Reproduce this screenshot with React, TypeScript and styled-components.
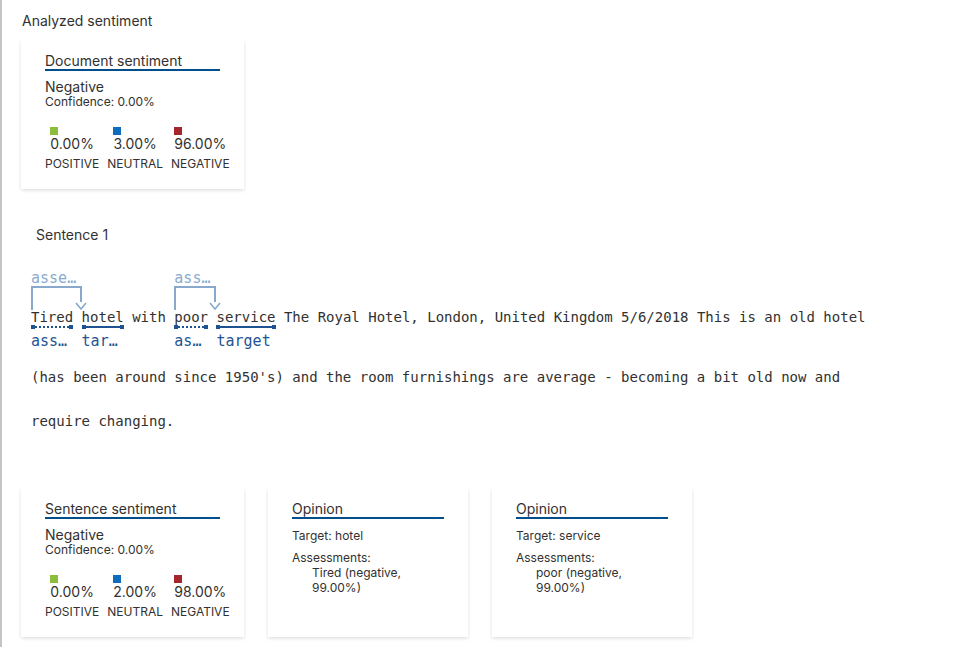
import React from 'react';
import styled, { createGlobalStyle } from 'styled-components';

type MarkKind = 'assessment' | 'target';

interface Segment {
  text: string;
  kind?: MarkKind;
  arc?: { label: string; span: number };
}

interface Score {
  label: string;
  value: string;
  color: string;
}

const docScores: Score[] = [
  { label: 'Positive', value: '0.00%', color: '#8cbd3c' },
  { label: 'Neutral', value: '3.00%', color: '#0f6cbd' },
  { label: 'Negative', value: '96.00%', color: '#a4262c' },
];

const sentenceScores: Score[] = [
  { label: 'Positive', value: '0.00%', color: '#8cbd3c' },
  { label: 'Neutral', value: '2.00%', color: '#0f6cbd' },
  { label: 'Negative', value: '98.00%', color: '#a4262c' },
];

const firstLine: Segment[] = [
  { text: 'Tired', kind: 'assessment', arc: { label: 'assessment', span: 6 } },
  { text: ' ' },
  { text: 'hotel', kind: 'target' },
  { text: ' with ' },
  { text: 'poor', kind: 'assessment', arc: { label: 'assessment', span: 5 } },
  { text: ' ' },
  { text: 'service', kind: 'target' },
  { text: ' The Royal Hotel, London, United Kingdom 5/6/2018 This is an old hotel' },
];

const restLines = [
  "(has been around since 1950's) and the room furnishings are average - becoming a bit old now and",
  'require changing.',
];

const opinions = [
  { target: 'hotel', assessment: 'Tired (negative, 99.00%)' },
  { target: 'service', assessment: 'poor (negative, 99.00%)' },
];

const ScoreRow = ({ scores }: { scores: Score[] }) => (
  <Scores>
    {scores.map((s) => (
      <ScoreColumn key={s.label}>
        <ScoreGroup>
          <Swatch color={s.color} />
          <ScoreValue>{s.value}</ScoreValue>
        </ScoreGroup>
        <ScoreLabel>{s.label}</ScoreLabel>
      </ScoreColumn>
    ))}
  </Scores>
);

const SentimentCard = ({ title, scores }: { title: string; scores: Score[] }) => (
  <Card $width={223}>
    <CardTitle>{title}</CardTitle>
    <SentimentName>Negative</SentimentName>
    <Confidence>Confidence: 0.00%</Confidence>
    <ScoreRow scores={scores} />
  </Card>
);

const App = () => {
  return (
    <Page>
      <GlobalStyle />
      <Heading>Analyzed sentiment</Heading>
      <SentimentCard title='Document sentiment' scores={docScores} />

      <SentenceHeading>Sentence 1</SentenceHeading>
      <SentenceText>
        <FirstLine>
          {firstLine.map((seg, i) => (
            <Token key={`seg_${i}`}>
              <ArcSlot>
                {seg.arc && (
                  <Arc style={{ width: `${seg.arc.span}ch` }}>
                    <ArcLabel>{seg.arc.label}</ArcLabel>
                    <ArcBox>
                      <svg width='12' height='8' viewBox='0 0 12 8'>
                        <path d='M1 1 L6 7 L11 1' fill='none' stroke='#88a9cb' strokeWidth='1.6' />
                      </svg>
                    </ArcBox>
                  </Arc>
                )}
              </ArcSlot>
              <Word>{seg.text}</Word>
              {seg.kind && (
                <>
                  <Marker>
                    <Cap />
                    <MarkLine $dotted={seg.kind === 'assessment'} />
                    <Cap />
                  </Marker>
                  <MarkLabel>{seg.kind}</MarkLabel>
                </>
              )}
            </Token>
          ))}
        </FirstLine>
        <RestLines>
          {restLines.map((line) => (
            <div key={line}>{line}</div>
          ))}
        </RestLines>
      </SentenceText>

      <CardRow>
        <SentimentCard title='Sentence sentiment' scores={sentenceScores} />
        {opinions.map((op) => (
          <Card $width={200} key={op.target}>
            <CardTitle>Opinion</CardTitle>
            <OpinionTarget>Target: {op.target}</OpinionTarget>
            <Assessments>
              Assessments:
              <AssessmentItem>{op.assessment}</AssessmentItem>
            </Assessments>
          </Card>
        ))}
      </CardRow>
    </Page>
  );
};

const GlobalStyle = createGlobalStyle`
  html, body {
    margin: 0;
    padding: 0;
    background: #ffffff;
  }
  body {
    font-family: Inter, "Noto Sans", sans-serif;
    color: #323130;
  }
`;

const Page = styled.div`
  min-height: 100vh;
  box-sizing: border-box;
  border-left: 2px solid #c4c4c4;
  padding: 11px 0 0 19px;
`;
const Heading = styled.div`
  font-size: 14px;
  line-height: 20px;
  margin: 0 0 9px 1px;
`;
const Card = styled.div<{ $width: number }>`
  box-sizing: border-box;
  width: ${(p) => p.$width}px;
  height: 149px;
  padding: 13px 24px 0;
  background: #ffffff;
  box-shadow: 0 1.6px 3.6px 0 rgba(0, 0, 0, 0.132), 0 0.3px 0.9px 0 rgba(0, 0, 0, 0.108);
  flex-shrink: 0;
`;
const CardTitle = styled.div`
  font-size: 14px;
  line-height: 16px;
  border-bottom: 2px solid #004e8c;
`;
const SentimentName = styled.div`
  font-size: 14px;
  line-height: 16px;
  margin-top: 8px;
`;
const Confidence = styled.div`
  font-size: 12px;
  line-height: 14px;
`;
const Scores = styled.div`
  display: flex;
  gap: 8px;
  margin-top: 18px;
`;
const ScoreColumn = styled.div`
  display: flex;
  flex-direction: column;
  align-items: center;
`;
const ScoreGroup = styled.div`
  display: flex;
  flex-direction: column;
  align-items: flex-start;
`;
const Swatch = styled.div<{ color: string }>`
  width: 8px;
  height: 8px;
  background: ${(p) => p.color};
`;
const ScoreValue = styled.div`
  font-size: 14px;
  line-height: 16px;
  margin-top: 1px;
`;
const ScoreLabel = styled.div`
  font-size: 12px;
  line-height: 14px;
  margin-top: 5px;
  text-transform: uppercase;
`;
const SentenceHeading = styled.div`
  font-size: 14px;
  line-height: 20px;
  margin: 36px 0 0 15px;
`;
const SentenceText = styled.div`
  margin: 25px 0 0 10px;
  font-family: "DejaVu Sans Mono", "Liberation Mono", monospace;
  font-size: 14px;
  color: #323130;
`;
const FirstLine = styled.div`
  display: flex;
  align-items: flex-start;
`;
const Token = styled.div`
  display: flex;
  flex-direction: column;
`;
const ArcSlot = styled.div`
  width: 0;
  height: 40px;
`;
const Arc = styled.div`
  display: flex;
  flex-direction: column;
`;
const ArcLabel = styled.div`
  font-size: 15px;
  line-height: 16px;
  color: #8aabcf;
  white-space: nowrap;
  overflow: hidden;
  text-overflow: ellipsis;
`;
const ArcBox = styled.div`
  box-sizing: border-box;
  height: 24px;
  border: 2px solid #88a9cb;
  border-bottom: none;
  display: flex;
  justify-content: flex-end;
  align-items: flex-end;
  svg {
    display: block;
    margin-right: -7px;
    background: #ffffff;
  }
`;
const Word = styled.div`
  white-space: pre;
  line-height: 15px;
`;
const Marker = styled.div`
  display: flex;
  align-items: center;
  height: 4px;
`;
const Cap = styled.div`
  width: 4px;
  height: 4px;
  background: #1d5391;
`;
const MarkLine = styled.div<{ $dotted: boolean }>`
  flex: 1;
  border-top: 2px ${(p) => (p.$dotted ? 'dotted' : 'solid')} #1d5391;
`;
const MarkLabel = styled.div`
  width: 0;
  min-width: 100%;
  margin-top: 4px;
  font-size: 15px;
  line-height: 16px;
  color: #1f5592;
  white-space: nowrap;
  overflow: hidden;
  text-overflow: ellipsis;
`;
const RestLines = styled.div`
  margin-top: 6px;
  line-height: 44px;
  white-space: pre;
`;
const CardRow = styled.div`
  display: flex;
  gap: 24px;
  margin-top: 45px;
`;
const OpinionTarget = styled.div`
  font-size: 12px;
  line-height: 14px;
  margin-top: 10px;
`;
const Assessments = styled.div`
  font-size: 12px;
  line-height: 15px;
  margin-top: 7px;
`;
const AssessmentItem = styled.div`
  padding-left: 20px;
  max-width: 115px;
`;

export default App;
